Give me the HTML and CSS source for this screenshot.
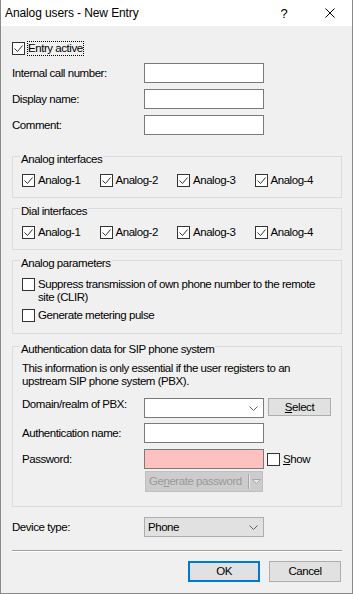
FILE: index.html
```html
<!DOCTYPE html>
<html>
<head>
<meta charset="utf-8">
<title>Analog users - New Entry</title>
<link rel="stylesheet" href="styles.css">
</head>
<body>
<div class="window">
  <div class="titlebar">
    <span class="title">Analog users - New Entry</span>
    <span class="cap-btn help">?</span>
    <span class="cap-btn close"><svg width="10" height="10" viewBox="0 0 10 10"><path d="M0.5 0.5 L9.5 9.5 M9.5 0.5 L0.5 9.5" stroke="#000" stroke-width="1" fill="none"/></svg></span>
  </div>
  <div class="client">
    <label class="check entry">
      <span class="box"><svg width="11" height="11" viewBox="0 0 11 11"><path d="M1.5 5.5 L4.5 8.5 L9.5 2.5" stroke="#333" stroke-width="1" fill="none"/></svg></span>
      <span class="focus">Entry active</span>
    </label>

    <div class="rows top-rows">
      <div class="row"><span class="lbl">Internal call number:</span><span class="field"></span></div>
      <div class="row"><span class="lbl">Display name:</span><span class="field"></span></div>
      <div class="row"><span class="lbl">Comment:</span><span class="field"></span></div>
    </div>

    <div class="group g1">
      <div class="group-title">Analog interfaces</div>
      <div class="checks-row">
        <label class="check col"><span class="box"><svg width="11" height="11" viewBox="0 0 11 11"><path d="M1.5 5.5 L4.5 8.5 L9.5 2.5" stroke="#333" stroke-width="1" fill="none"/></svg></span>Analog-1</label>
        <label class="check col"><span class="box"><svg width="11" height="11" viewBox="0 0 11 11"><path d="M1.5 5.5 L4.5 8.5 L9.5 2.5" stroke="#333" stroke-width="1" fill="none"/></svg></span>Analog-2</label>
        <label class="check col"><span class="box"><svg width="11" height="11" viewBox="0 0 11 11"><path d="M1.5 5.5 L4.5 8.5 L9.5 2.5" stroke="#333" stroke-width="1" fill="none"/></svg></span>Analog-3</label>
        <label class="check col"><span class="box"><svg width="11" height="11" viewBox="0 0 11 11"><path d="M1.5 5.5 L4.5 8.5 L9.5 2.5" stroke="#333" stroke-width="1" fill="none"/></svg></span>Analog-4</label>
      </div>
    </div>

    <div class="group g2">
      <div class="group-title">Dial interfaces</div>
      <div class="checks-row">
        <label class="check col"><span class="box"><svg width="11" height="11" viewBox="0 0 11 11"><path d="M1.5 5.5 L4.5 8.5 L9.5 2.5" stroke="#333" stroke-width="1" fill="none"/></svg></span>Analog-1</label>
        <label class="check col"><span class="box"><svg width="11" height="11" viewBox="0 0 11 11"><path d="M1.5 5.5 L4.5 8.5 L9.5 2.5" stroke="#333" stroke-width="1" fill="none"/></svg></span>Analog-2</label>
        <label class="check col"><span class="box"><svg width="11" height="11" viewBox="0 0 11 11"><path d="M1.5 5.5 L4.5 8.5 L9.5 2.5" stroke="#333" stroke-width="1" fill="none"/></svg></span>Analog-3</label>
        <label class="check col"><span class="box"><svg width="11" height="11" viewBox="0 0 11 11"><path d="M1.5 5.5 L4.5 8.5 L9.5 2.5" stroke="#333" stroke-width="1" fill="none"/></svg></span>Analog-4</label>
      </div>
    </div>

    <div class="group g3">
      <div class="group-title">Analog parameters</div>
      <label class="check multi clir"><span class="box"></span><span class="wrap">Suppress transmission of own phone number to the remote site (CLIR)</span></label>
      <label class="check multi pulse"><span class="box"></span><span>Generate metering pulse</span></label>
    </div>

    <div class="group g4">
      <div class="group-title">Authentication data for SIP phone system</div>
      <p class="info">This information is only essential if the user registers to an upstream SIP phone system (PBX).</p>
      <div class="row r-domain">
        <span class="lbl in">Domain/realm of PBX:</span>
        <span class="field combo"><svg class="chev" width="9" height="5" viewBox="0 0 9 5"><path d="M0.5 0.5 L4.5 4.5 L8.5 0.5" stroke="#606060" stroke-width="1" fill="none"/></svg></span>
        <span class="btn select"><u>S</u>elect</span>
      </div>
      <div class="row r-auth">
        <span class="lbl in">Authentication name:</span>
        <span class="field"></span>
      </div>
      <div class="row r-pass">
        <span class="lbl in">Password:</span>
        <span class="field pink"></span>
        <label class="check show"><span class="box"></span><span><u>S</u>how</span></label>
      </div>
      <div class="gen">
        <span class="gen-text">Ge<u>n</u>erate password</span>
        <span class="gen-sep"></span>
        <svg class="gen-arrow" width="9" height="5" viewBox="0 0 9 5"><path d="M0.5 0.5 L8.5 0.5 L4.5 4.5 Z" fill="#e8e8e8" stroke="#a6a6a6" stroke-width="1"/></svg>
      </div>
    </div>

    <div class="row r-device">
      <span class="lbl">Device type:</span>
      <span class="field dropdown">Phone<svg class="chev" width="9" height="5" viewBox="0 0 9 5"><path d="M0.5 0.5 L4.5 4.5 L8.5 0.5" stroke="#606060" stroke-width="1" fill="none"/></svg></span>
    </div>

    <div class="separator"></div>

    <div class="buttons">
      <span class="btn ok">OK</span>
      <span class="btn cancel">Cancel</span>
    </div>
  </div>
</div>
</body>
</html>
```

FILE: styles.css
```css
html, body {
  margin: 0;
  padding: 0;
  background: #ffffff;
}

body {
  font-family: "Liberation Sans", Arial, sans-serif;
  font-size: 11.5px;
  line-height: 13px;
  letter-spacing: -0.45px;
  color: #000;
}

.window {
  width: 353px;
  height: 594px;
  box-sizing: border-box;
  border: 1px solid #8a8a8a;
  border-top: 0;
  background: #f0f0f0;
  display: flex;
  flex-direction: column;
}

.titlebar {
  height: 26px;
  flex: none;
  background: #ffffff;
  display: flex;
  align-items: center;
  font-size: 12px;
  letter-spacing: -0.1px;
  line-height: 16px;
}

.title {
  flex: 1;
  padding-left: 4px;
}

.cap-btn {
  width: 46px;
  height: 26px;
  display: flex;
  align-items: center;
  justify-content: center;
}

.help {
  font-size: 13px;
  padding-top: 1px;
  box-sizing: border-box;
}

.close {
  width: 45px;
}

.client {
  flex: 1;
  display: flex;
  flex-direction: column;
  padding: 0 10px 0 11px;
}

/* checkboxes */
.check {
  display: flex;
  align-items: center;
}

.box {
  width: 13px;
  height: 13px;
  box-sizing: border-box;
  border: 1px solid #333333;
  background: #ffffff;
  flex: none;
  margin-right: 3px;
  display: flex;
}

.entry {
  margin-top: 15px;
  height: 15px;
}

.entry .box {
  margin-right: 2px;
}

.focus {
  padding: 1px 1px;
  outline: 1px dotted #000;
  outline-offset: -1px;
}

/* form rows */
.top-rows {
  margin-top: 7px;
  display: flex;
  flex-direction: column;
  gap: 6px;
}

.row {
  display: flex;
  align-items: center;
  height: 20px;
}

.lbl {
  width: 132px;
  flex: none;
  white-space: nowrap;
}

.lbl.in {
  width: 122px;
}

.field {
  width: 120px;
  height: 20px;
  box-sizing: border-box;
  border: 1px solid #7a7a7a;
  background: #ffffff;
  flex: none;
  display: flex;
  align-items: center;
}

.field.pink {
  background: #ffc0c0;
}

.combo {
  justify-content: flex-end;
  padding-right: 5px;
}

.dropdown {
  background: #e1e1e1;
  border-color: #adadad;
  padding: 0 5px 0 3px;
  justify-content: space-between;
}

/* group boxes */
.group {
  border: 1px solid #dcdcdc;
  padding: 0 9px 10px 9px;
}

.group-title {
  width: fit-content;
  margin: -4px 0 0 -2px;
  padding: 0 1px;
  background: #f0f0f0;
}

.g1 { margin-top: 21px; }
.g2 { margin-top: 10px; }
.g3 { margin-top: 10px; padding-bottom: 11px; }
.g4 { margin-top: 12px; padding-bottom: 14px; }

.checks-row {
  display: flex;
  margin-top: 8px;
}

.col {
  width: 80px;
}

.multi {
  align-items: flex-start;
}

.wrap {
  width: 285px;
}

.clir { margin-top: 8px; }
.pulse { margin-top: 5px; }

.info {
  margin: 6px 0 0 0;
  width: 290px;
}

.r-domain {
  margin-top: 10px;
  align-items: flex-start;
}

.r-auth { margin-top: 5px; }
.r-pass { margin-top: 6px; }

.show {
  margin-left: 3px;
}

/* buttons */
.btn {
  box-sizing: border-box;
  background: #e1e1e1;
  border: 1px solid #adadad;
  display: flex;
  align-items: center;
  justify-content: center;
  flex: none;
}

.select {
  width: 63px;
  height: 18px;
  margin-left: 4px;
}

.gen {
  margin: 2px 0 0 123px;
  width: 118px;
  height: 21px;
  box-sizing: border-box;
  background: #cccccc;
  border: 1px solid #bfbfbf;
  color: #9a9a9a;
  display: flex;
  align-items: center;
}

.gen-text {
  box-sizing: border-box;
  padding-left: 3px;
  width: 102px;
  flex: none;
  white-space: nowrap;
  overflow: hidden;
}

.gen-sep {
  width: 1px;
  height: 15px;
  background: #a6a6a6;
  border-right: 1px solid #e6e6e6;
  flex: none;
}

.gen-arrow {
  margin-left: 2px;
}

.r-device {
  margin-top: 10px;
}

.separator {
  margin-top: 13px;
  height: 0;
  border-top: 1px solid #a0a0a0;
  border-bottom: 1px solid #ffffff;
}

.buttons {
  margin-top: 9px;
  display: flex;
  justify-content: flex-end;
  gap: 9px;
  padding-right: 1px;
}

.ok,
.cancel {
  width: 72px;
  height: 21px;
}

.ok {
  border: 2px solid #0078d7;
}
```
